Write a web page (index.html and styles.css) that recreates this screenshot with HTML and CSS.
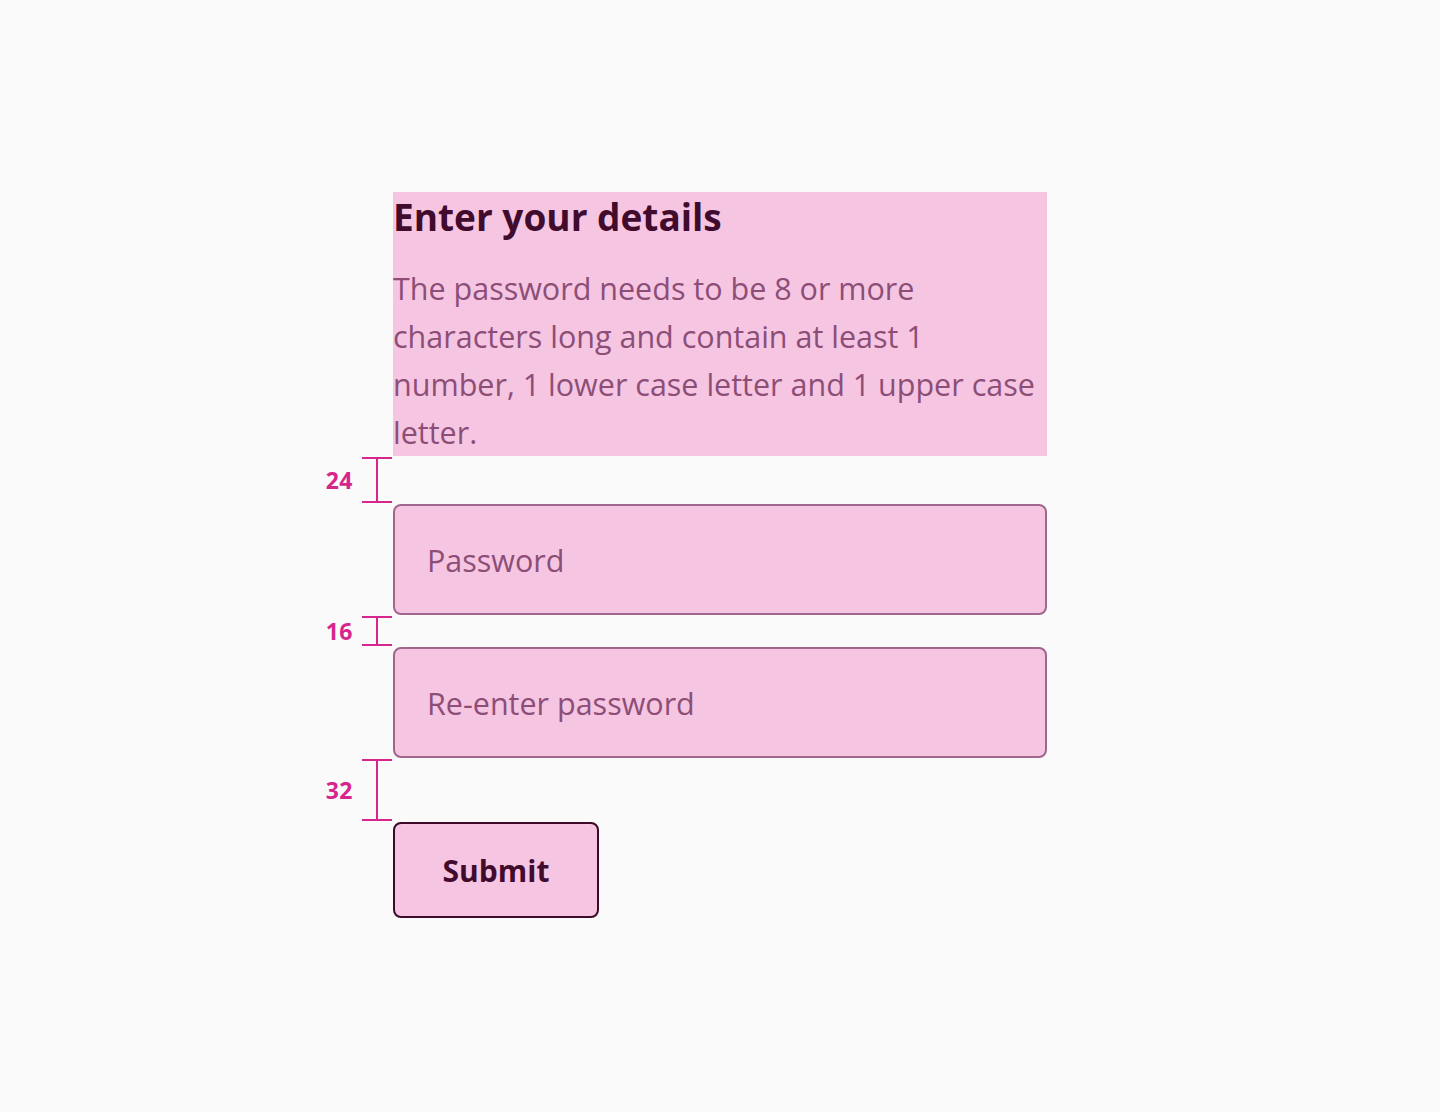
FILE: index.html
```html
<!DOCTYPE html>
<html lang="en">
<head>
<meta charset="utf-8">
<title>Enter your details</title>
<link rel="stylesheet" href="styles.css">
</head>
<body>
<main class="page">
  <div class="spec">
    <div class="cell content intro">
      <h1 class="title">Enter your details</h1>
      <p class="lead">The password needs to be 8 or more characters long and contain at least 1 number, 1 lower case letter and 1 upper case letter.</p>
    </div>

    <div class="cell note gap-24"><span class="note-label">24</span><span class="bracket"></span></div>
    <div class="cell content gap-24"></div>

    <div class="cell content"><div class="field"><span class="placeholder">Password</span></div></div>

    <div class="cell note gap-16"><span class="note-label">16</span><span class="bracket"></span></div>
    <div class="cell content gap-16"></div>

    <div class="cell content"><div class="field"><span class="placeholder">Re-enter password</span></div></div>

    <div class="cell note gap-32"><span class="note-label">32</span><span class="bracket"></span></div>
    <div class="cell content gap-32"></div>

    <div class="cell content"><button class="submit" type="button">Submit</button></div>
  </div>
</main>
</body>
</html>
```

FILE: styles.css
```css
* { box-sizing: border-box; }

html, body {
  margin: 0;
  padding: 0;
  background: #fafafa;
}

body {
  font-family: "Open Sans", "Noto Sans", "Liberation Sans", sans-serif;
  width: 1440px;
  height: 1112px;
}

.page {
  padding-top: 192px;
}

.spec {
  display: grid;
  grid-template-columns: 80px 654px 80px;
  justify-content: center;
}

.content {
  grid-column: 2;
}

.note {
  grid-column: 1;
  display: flex;
  align-items: stretch;
  justify-content: flex-end;
  gap: 9px;
}

.intro {
  background: #f6c5e2;
}

.title {
  margin: 0 0 24px;
  font-size: 37px;
  line-height: 50px;
  font-weight: 700;
  color: #410b2e;
}

.lead {
  margin: -2px 0 0;
  width: 646px;
  font-size: 30.5px;
  line-height: 48px;
  color: #8c4e77;
}

.gap-24 { height: 48px; }
.gap-16 { height: 32px; }
.gap-32 { height: 64px; }

.note-label {
  align-self: center;
  font-size: 23px;
  font-weight: 700;
  letter-spacing: 0.5px;
  color: #d6258c;
}

.bracket {
  width: 30px;
  margin: 1px 1px 1px 0;
  border-top: 2px solid #d6258c;
  border-bottom: 2px solid #d6258c;
  background: linear-gradient(#d6258c, #d6258c) no-repeat center / 2px 100%;
}

.field {
  height: 111px;
  display: flex;
  align-items: center;
  padding: 0 32px;
  background: #f6c5e2;
  border: 2px solid #a0668d;
  border-radius: 8px;
}

.placeholder {
  font-size: 30.5px;
  color: #8c4e77;
}

.submit {
  width: 206px;
  height: 96px;
  padding: 0;
  background: #f6c5e2;
  border: 2px solid #3d0a2a;
  border-radius: 8px;
  font-family: inherit;
  font-size: 30px;
  font-weight: 700;
  color: #410b2e;
}
```
